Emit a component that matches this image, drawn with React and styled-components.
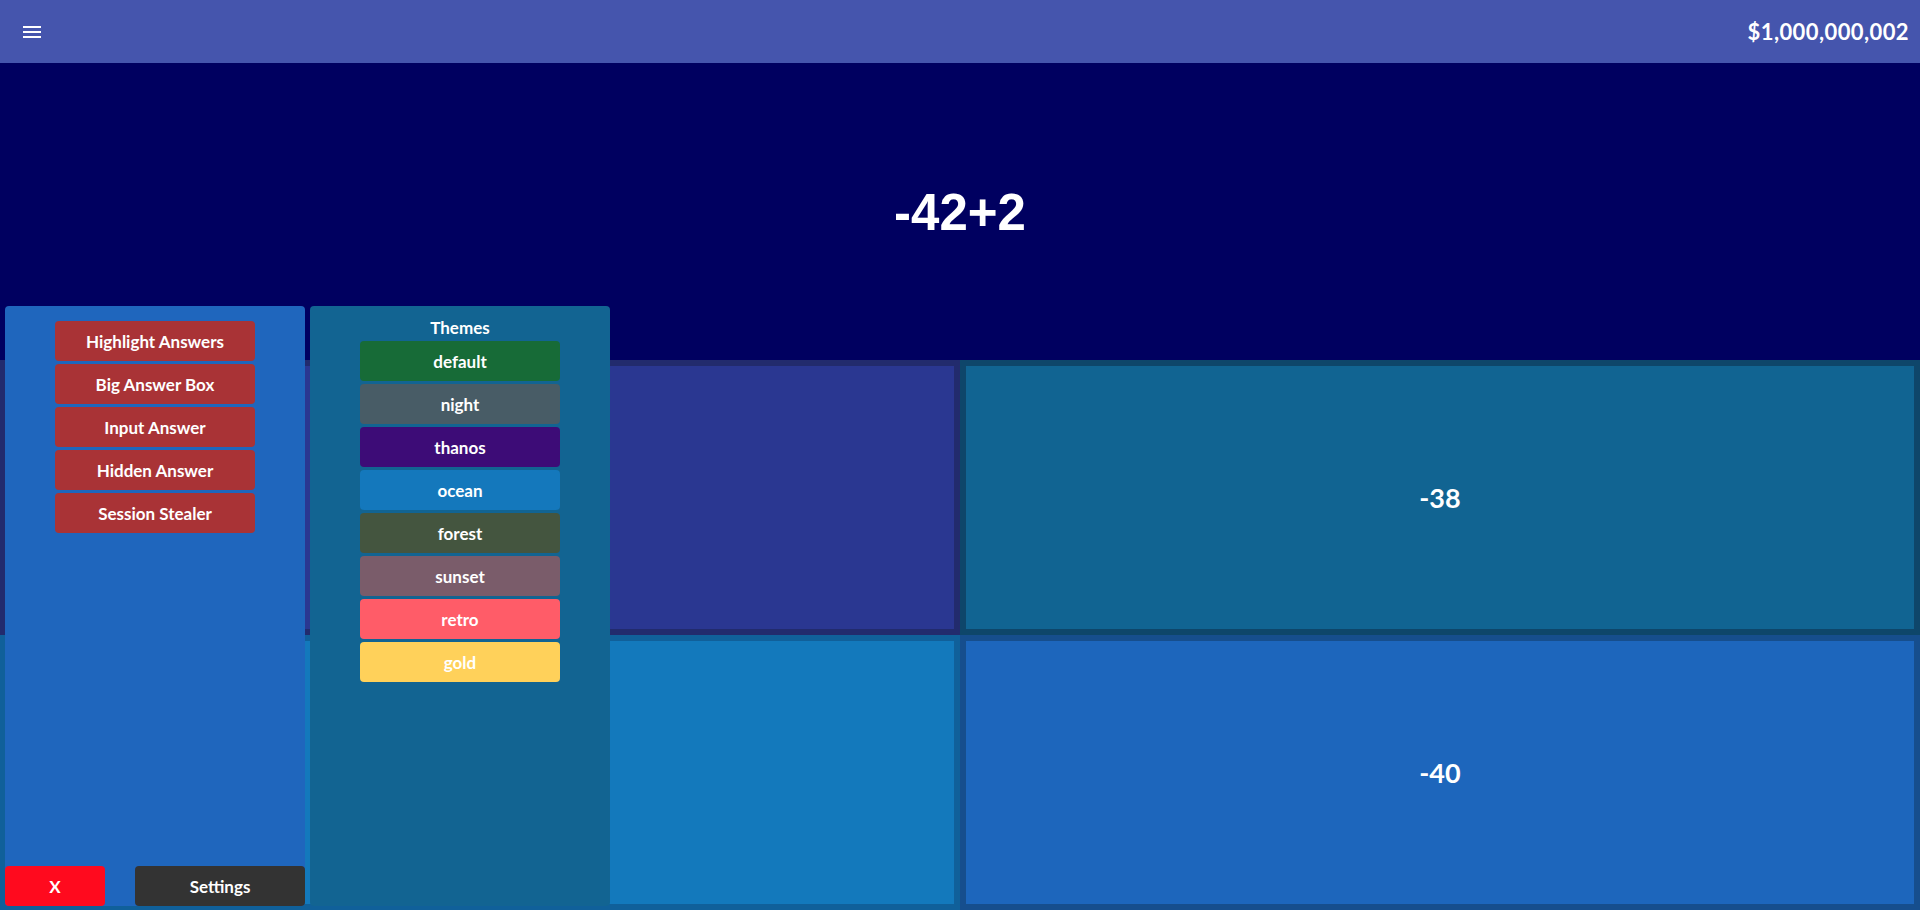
import styled, { createGlobalStyle } from "styled-components";

const GlobalStyle = createGlobalStyle`
  * {
    box-sizing: border-box;
  }
  body {
    margin: 0;
    overflow: hidden;
    background: #000060;
    font-family: Lato, "Noto Sans", sans-serif;
  }
`

// the two answers on the left sit under the cheat panels, so their text is not shown
const answers = [
    { id: 'a', text: '', box: '#2a3791', frame: '#222b6d' },
    { id: 'b', text: '-38', box: '#116492', frame: '#0e466a' },
    { id: 'c', text: '', box: '#1379bc', frame: '#10609a' },
    { id: 'd', text: '-40', box: '#1d66bc', frame: '#164e8d' },
]

const cheats = ['Highlight Answers', 'Big Answer Box', 'Input Answer', 'Hidden Answer', 'Session Stealer']

const themes = [
    { name: 'default', color: '#176b37' },
    { name: 'night', color: '#485c66' },
    { name: 'thanos', color: '#3d0c77' },
    { name: 'ocean', color: '#1478bc' },
    { name: 'forest', color: '#44553f' },
    { name: 'sunset', color: '#7a5c6a' },
    { name: 'retro', color: '#ff5c68' },
    { name: 'gold', color: '#ffd15a' },
]

function MenuIcon() {
    return (
        <svg width="24" height="24" viewBox="0 0 24 24" fill="#fff">
            <path d="M3 18h18v-2H3v2zm0-5h18v-2H3v2zm0-7v2h18V6H3z" />
        </svg>
    )
}

export default function App() {
    return (
        <>
            <GlobalStyle />
            <Page>
                <TopBar>
                    <MenuButton><MenuIcon /></MenuButton>
                    <Money>$1,000,000,002</Money>
                </TopBar>
                <QuestionArea>
                    <Question>-42+2</Question>
                </QuestionArea>
                <AnswerGrid>
                    {answers.map(a => (
                        <AnswerSlot key={a.id} frame={a.frame}>
                            <AnswerBox box={a.box}>{a.text}</AnswerBox>
                        </AnswerSlot>
                    ))}
                </AnswerGrid>

                <CheatPanel>
                    <ButtonStack>
                        {cheats.map(c => (
                            <PanelButton key={c} color="#a93336">{c}</PanelButton>
                        ))}
                    </ButtonStack>
                    <PanelFooter>
                        <FooterButton color="#ff0a1e" width={100}>X</FooterButton>
                        <FooterButton color="#333333" width={170}>Settings</FooterButton>
                    </PanelFooter>
                </CheatPanel>

                <ThemesPanel>
                    <PanelTitle>Themes</PanelTitle>
                    <ButtonStack>
                        {themes.map(t => (
                            <PanelButton key={t.name} color={t.color}>{t.name}</PanelButton>
                        ))}
                    </ButtonStack>
                </ThemesPanel>
            </Page>
        </>
    )
}

const Page = styled.div`
position: relative;
height: 100vh;
display: flex;
flex-direction: column;
background: #000060;
color: #fff;
`

const TopBar = styled.header`
height: 63px;
flex-shrink: 0;
display: flex;
align-items: center;
justify-content: space-between;
padding: 0 11px 0 20px;
background-color: #4555ad;
`

const MenuButton = styled.div`
width: 24px;
height: 24px;
display: flex;

svg {
    display: block;
}
`

const Money = styled.div`
font-size: 22px;
font-weight: 700;
letter-spacing: 0.4px;
`

const QuestionArea = styled.div`
flex: 1;
display: flex;
align-items: center;
justify-content: center;
`

const Question = styled.div`
font-family: "Liberation Sans", Arial, sans-serif;
font-size: 51px;
font-weight: 700;
margin-top: 2px;
`

const AnswerGrid = styled.div`
height: 550px;
flex-shrink: 0;
display: grid;
grid-template-columns: 1fr 1fr;
grid-template-rows: 1fr 1fr;
`

const AnswerSlot = styled.div`
padding: 6px;
background-color: ${props => props.frame};
display: flex;
`

const AnswerBox = styled.div`
flex: 1;
display: flex;
align-items: center;
justify-content: center;
background-color: ${props => props.box};
font-size: 27px;
font-weight: 700;
`

const Panel = styled.div`
position: absolute;
top: 306px;
width: 300px;
height: 600px;
border-radius: 4px;
display: flex;
flex-direction: column;
align-items: center;
`

const CheatPanel = styled(Panel)`
left: 5px;
padding-top: 15px;
background-color: #1f66bd;
`

const ThemesPanel = styled(Panel)`
left: 310px;
padding-top: 12px;
background-color: #126492;
`

const PanelTitle = styled.div`
font-size: 17px;
font-weight: 700;
line-height: 20px;
margin-bottom: 3px;
`

const ButtonStack = styled.div`
display: flex;
flex-direction: column;
gap: 3px;
`

const PanelButton = styled.div`
width: 200px;
height: 40px;
border-radius: 4px;
background-color: ${props => props.color};
display: flex;
align-items: center;
justify-content: center;
font-size: 17px;
font-weight: 700;
cursor: pointer;
`

const PanelFooter = styled.div`
margin-top: auto;
align-self: stretch;
display: flex;
justify-content: space-between;
`

const FooterButton = styled.div`
width: ${props => props.width}px;
height: 40px;
border-radius: 4px;
background-color: ${props => props.color};
display: flex;
align-items: center;
justify-content: center;
font-size: 17px;
font-weight: 700;
cursor: pointer;
`
